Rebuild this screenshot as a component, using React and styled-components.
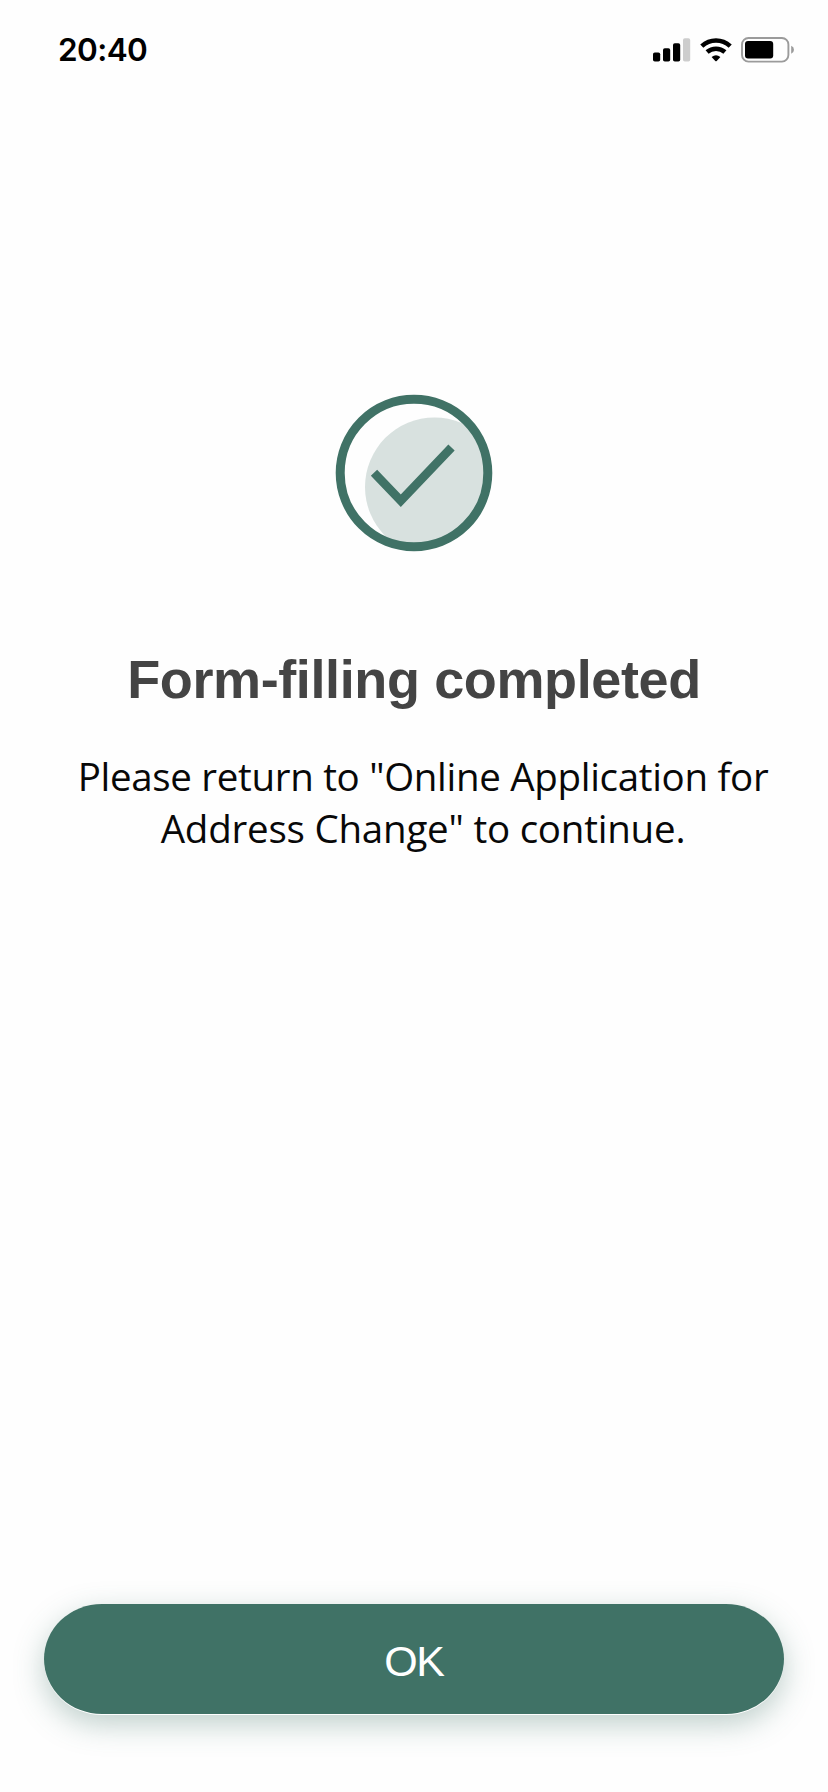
import React from "react";
import styled, { createGlobalStyle } from "styled-components";

const GlobalStyle = createGlobalStyle`
  * { box-sizing: border-box; }
  body { margin: 0; background: #fefefe; }
`;

const Screen = styled.main`
  display: flex;
  flex-direction: column;
  width: 828px;
  height: 1792px;
  overflow: hidden;
  background: #fefefe;
  font-family: "Liberation Sans", Arial, sans-serif;
`;

const StatusBar = styled.header`
  display: flex;
  align-items: center;
  justify-content: space-between;
  height: 99px;
  padding: 0 33px 0 58px;
`;

const Time = styled.time`
  font: 600 31.5px/40px Inter, sans-serif;
  letter-spacing: -0.6px;
  color: #000;
`;

const StatusIcons = styled.div`
  display: flex;
  align-items: center;
  gap: 9px;
`;

const Result = styled.section`
  display: flex;
  flex: 1;
  flex-direction: column;
  align-items: center;
  padding-top: 295px;
`;

const Title = styled.h1`
  margin: 94px 0 0;
  font-size: 54px;
  line-height: 66px;
  font-weight: 700;
  letter-spacing: -0.38px;
  color: #444;
  white-space: nowrap;
`;

const Message = styled.p`
  display: flex;
  flex-direction: column;
  align-items: center;
  margin: 39px 0 0 18px;
  font: 400 38.5px/51.5px "Open Sans", "Noto Sans", sans-serif;
  color: #080808;
`;

const Line = styled.span`
  white-space: nowrap;
  letter-spacing: ${({ $tracking }) => $tracking}px;
`;

const Footer = styled.footer`
  padding: 0 44px 78px;
`;

const Button = styled.button`
  display: flex;
  align-items: center;
  justify-content: center;
  width: 740px;
  height: 110px;
  padding: 4px 0 0;
  border: 0;
  border-radius: 58px / 55px;
  background: #407266;
  box-shadow: 0 1px 0 #fff, 0 10px 30px rgba(64, 114, 102, 0.34);
  color: #fff;
  font: 400 43px/50px "Liberation Sans", Arial, sans-serif;
  letter-spacing: -1.4px;
`;

const Signal = () => (
  <svg width="38" height="24" viewBox="0 0 38 24">
    <rect x="0" y="14.5" width="7.2" height="9" rx="1.8" />
    <rect x="10" y="10.3" width="7.2" height="13.2" rx="1.8" />
    <rect x="20" y="5.3" width="7.2" height="18.2" rx="1.8" />
    <rect x="30" y="0.3" width="7.2" height="23.2" rx="1.8" fill="#cdcdcd" />
  </svg>
);

const Wifi = () => (
  <svg width="32" height="24" viewBox="0 0 32 24">
    <g fill="none" stroke="#000" strokeWidth="4.6">
      <path d="M1.8 8.1Q8 2.5 16 2.5T30.2 8.1" />
      <path d="M7.1 14Q10.9 10.7 16 10.7T24.9 14" />
    </g>
    <path d="M11.6 18.9Q16 15.6 20.4 18.9L16.7 22.9Q16 23.6 15.3 22.9Z" />
  </svg>
);

const Battery = () => (
  <svg width="54" height="26" viewBox="0 0 54 26">
    <rect x="1" y="1" width="46.4" height="23.6" rx="6.5" fill="none" stroke="#9b9b9b" strokeWidth="1.9" />
    <rect x="4" y="4.1" width="28.2" height="17.4" rx="3" />
    <path d="M50.2 8.8Q53 10 53 12.8T50.2 16.8Z" fill="#9b9b9b" />
  </svg>
);

const CheckMark = () => (
  <svg width="158" height="158" viewBox="0 0 158 158">
    <defs>
      <clipPath id="ring">
        <circle cx="79" cy="79" r="74" />
      </clipPath>
    </defs>
    <circle cx="99.5" cy="93" r="69.5" fill="#d8e1df" clipPath="url(#ring)" />
    <circle cx="79" cy="79" r="73.8" fill="none" stroke="#407266" strokeWidth="9" />
    <path d="M39 78.8L65.8 106.8L116.5 53.6" fill="none" stroke="#407266" strokeWidth="8.7" />
  </svg>
);

export default function App() {
  return (
    <Screen>
      <GlobalStyle />
      <StatusBar>
        <Time>20:40</Time>
        <StatusIcons>
          <Signal />
          <Wifi />
          <Battery />
        </StatusIcons>
      </StatusBar>
      <Result>
        <CheckMark />
        <Title>Form-filling completed</Title>
        <Message>
          <Line $tracking={-0.31}>Please return to "Online Application for</Line>
          <Line $tracking={-0.22}>Address Change" to continue.</Line>
        </Message>
      </Result>
      <Footer>
        <Button type="button">OK</Button>
      </Footer>
    </Screen>
  );
}
